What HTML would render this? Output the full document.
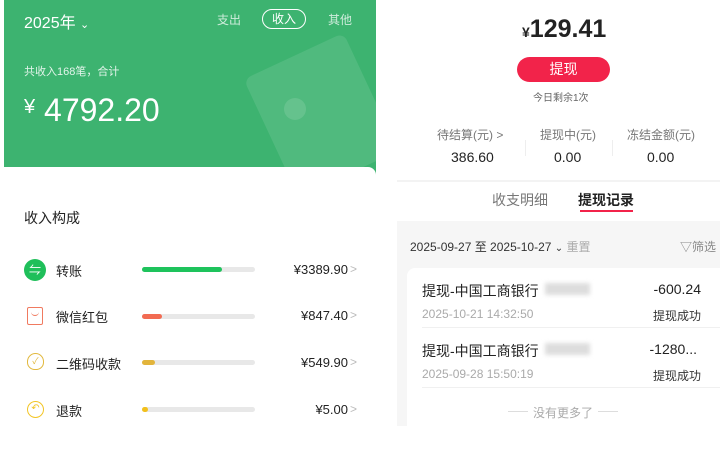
<!DOCTYPE html>
<html><head><meta charset="utf-8"><style>
*{margin:0;padding:0;box-sizing:border-box}
body{width:720px;height:454px;background:#fff;position:relative;overflow:hidden;font-family:"Liberation Sans","Noto Sans CJK SC",sans-serif;color:#222}
.a{position:absolute;white-space:nowrap}
.bar{position:absolute;left:142px;width:113px;height:5px;border-radius:3px;background:#e8e8e8}
.bar i{display:block;height:5px;border-radius:3px}
.amt{position:absolute;right:372px;font-size:13px;color:#222}
.chev{position:absolute;left:350px;font-size:12px;color:#bbb}
.lbl{position:absolute;left:56px;font-size:13px;color:#222}
</style></head><body>
<div class="a" style="left:4px;top:0;width:372px;height:175px;background:#3db370;overflow:hidden">
  <div class="a" style="left:262px;top:50px;width:110px;height:130px;background:rgba(255,255,255,0.1);transform:rotate(-25deg);border-radius:8px"></div>
  <div class="a" style="left:280px;top:98px;width:22px;height:22px;border-radius:50%;background:rgba(255,255,255,0.12)"></div>
</div>
<div class="a" style="left:4px;top:167px;width:372px;height:287px;background:#fff;border-radius:0 8px 0 0"></div>
<div class="a" style="left:24px;top:9px;font-size:16px;color:#fff">2025年 <span style="font-size:11px">&#8964;</span></div>
<div class="a" style="left:217px;top:11px;font-size:12px;color:rgba(255,255,255,0.75)">支出</div>
<div class="a" style="left:262px;top:9px;width:44px;height:20px;border:1px solid #fff;border-radius:10px;font-size:12px;color:#fff;text-align:center;line-height:18px">收入</div>
<div class="a" style="left:328px;top:11px;font-size:12px;color:rgba(255,255,255,0.75)">其他</div>
<div class="a" style="left:24px;top:63px;font-size:11px;color:rgba(255,255,255,0.85)">共收入168笔，合计</div>
<div class="a" style="left:24px;top:92px;font-size:32px;color:#fff"><span style="font-size:20px;vertical-align:8px">¥</span> 4792.20</div>

<div class="a" style="left:24px;top:208px;font-size:14px;color:#222">收入构成</div>

<div class="a" style="left:24px;top:259px;width:22px;height:22px;border-radius:50%;background:#1fbf5a;color:#fff;font-size:12px;text-align:center;line-height:22px">⇋</div>
<div class="lbl" style="top:261px">转账</div>
<div class="bar" style="top:267px"><i style="width:80px;background:#1ec35c"></i></div>
<div class="amt" style="top:262px">¥3389.90</div><div class="chev" style="top:262px">&gt;</div>

<div class="a" style="left:27px;top:307px;width:16px;height:18px;border:1.5px solid #f07a60;border-radius:2px"></div>
<div class="a" style="left:31px;top:312px;width:8px;height:4px;border-bottom:1.5px solid #f07a60;border-radius:0 0 4px 4px"></div>
<div class="lbl" style="top:307px">微信红包</div>
<div class="bar" style="top:314px"><i style="width:20px;background:#f26b52"></i></div>
<div class="amt" style="top:308px">¥847.40</div><div class="chev" style="top:308px">&gt;</div>

<div class="a" style="left:27px;top:353px;width:17px;height:17px;border:1.5px solid #e2b93f;border-radius:50% 50% 45% 45%;font-size:9px;color:#e2b93f;text-align:center;line-height:14px">✓</div>
<div class="lbl" style="top:354px">二维码收款</div>
<div class="bar" style="top:360px"><i style="width:13px;background:#e2b43b"></i></div>
<div class="amt" style="top:355px">¥549.90</div><div class="chev" style="top:355px">&gt;</div>

<div class="a" style="left:27px;top:401px;width:17px;height:17px;border:1.5px solid #f2c526;border-radius:50%;font-size:10px;color:#f2c526;text-align:center;line-height:14px">↶</div>
<div class="lbl" style="top:401px">退款</div>
<div class="bar" style="top:407px"><i style="width:6px;background:#f2c01c"></i></div>
<div class="amt" style="top:402px">¥5.00</div><div class="chev" style="top:402px">&gt;</div>

<!-- right -->
<div class="a" style="left:522px;top:15px;font-size:25px;font-weight:bold;color:#222"><span style="font-size:14px">¥</span>129.41</div>
<div class="a" style="left:517px;top:57px;width:93px;height:25px;border-radius:13px;background:#f2234a;color:#fff;font-size:14px;text-align:center;line-height:25px">提现</div>
<div class="a" style="left:533px;top:89px;font-size:10px;color:#666">今日剩余1次</div>
<div class="a" style="left:437px;top:126px;font-size:12px;color:#777">待结算(元) &gt;</div>
<div class="a" style="left:540px;top:126px;font-size:12px;color:#777">提现中(元)</div>
<div class="a" style="left:627px;top:126px;font-size:12px;color:#777">冻结金额(元)</div>
<div class="a" style="left:451px;top:149px;font-size:14px;color:#222">386.60</div>
<div class="a" style="left:554px;top:149px;font-size:14px;color:#222">0.00</div>
<div class="a" style="left:647px;top:149px;font-size:14px;color:#222">0.00</div>
<div class="a" style="left:525px;top:140px;width:1px;height:16px;background:#eee"></div>
<div class="a" style="left:612px;top:140px;width:1px;height:16px;background:#eee"></div>
<div class="a" style="left:397px;top:180px;width:323px;height:2px;background:#f3f3f3"></div>
<div class="a" style="left:492px;top:190px;font-size:14px;color:#777">收支明细</div>
<div class="a" style="left:578px;top:190px;font-size:14px;color:#222;font-weight:bold">提现记录</div>
<div class="a" style="left:580px;top:210px;width:53px;height:2px;background:#f2234a"></div>
<div class="a" style="left:397px;top:221px;width:323px;height:205px;background:#f6f6f6"></div>
<div class="a" style="left:410px;top:238px;font-size:12px;color:#333">2025-09-27 至 2025-10-27 <span style="font-size:10px">&#8964;</span> <span style="color:#aaa">重置</span></div>
<div class="a" style="left:680px;top:238px;font-size:12px;color:#888">▽筛选</div>
<div class="a" style="left:407px;top:268px;width:313px;height:158px;background:#fff;border-radius:8px 0 0 0"></div>
<div class="a" style="left:422px;top:281px;font-size:14px;color:#222">提现-中国工商银行</div>
<div class="a" style="left:545px;top:283px;width:45px;height:12px;background:#ddd;filter:blur(2px)"></div>
<div class="a" style="right:19px;top:281px;font-size:14px;color:#222">-600.24</div>
<div class="a" style="left:422px;top:307px;font-size:12px;color:#aaa">2025-10-21 14:32:50</div>
<div class="a" style="right:19px;top:307px;font-size:12px;color:#333">提现成功</div>
<div class="a" style="left:422px;top:327px;width:298px;height:1px;background:#f0f0f0"></div>
<div class="a" style="left:422px;top:341px;font-size:14px;color:#222">提现-中国工商银行</div>
<div class="a" style="left:545px;top:343px;width:45px;height:12px;background:#ddd;filter:blur(2px)"></div>
<div class="a" style="right:23px;top:341px;font-size:14px;color:#222">-1280...</div>
<div class="a" style="left:422px;top:367px;font-size:12px;color:#aaa">2025-09-28 15:50:19</div>
<div class="a" style="right:19px;top:367px;font-size:12px;color:#333">提现成功</div>
<div class="a" style="left:422px;top:387px;width:298px;height:1px;background:#f0f0f0"></div>
<div class="a" style="left:508px;top:411px;width:20px;height:1px;background:#ddd"></div>
<div class="a" style="left:533px;top:404px;font-size:12px;color:#aaa">没有更多了</div>
<div class="a" style="left:598px;top:411px;width:20px;height:1px;background:#ddd"></div>
</body></html>
